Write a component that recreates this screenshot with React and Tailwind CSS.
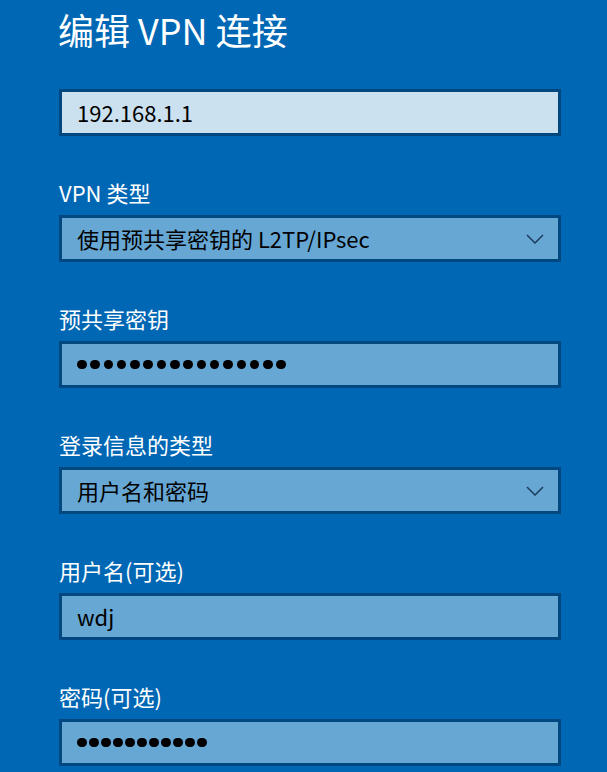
import React from "react";

const font = { fontFamily: '"Noto Sans CJK SC", "Noto Sans", sans-serif' };

function Chevron() {
  return (
    <svg width="18" height="10" viewBox="0 0 18 10" className="shrink-0">
      <path d="M1 1 L9 9 L17 1" fill="none" stroke="#1d3b5c" strokeWidth="1.5" />
    </svg>
  );
}

function Label({ children }) {
  return <div className="text-[22px] leading-[30px] text-white mb-[8px]">{children}</div>;
}

function Box({ light, children, chevron }) {
  return (
    <div
      className={
        "h-[47px] w-[502px] border-[3px] border-[#00487f] flex items-center pl-[15px] pr-[14px] " +
        (light ? "bg-[#cce1f0]" : "bg-[#67a7d4]")
      }
    >
      <div className="flex-1 text-[22px] text-black whitespace-nowrap">{children}</div>
      {chevron && <Chevron />}
    </div>
  );
}

function Dots({ n, pitch }) {
  return (
    <div className="flex items-center h-[30px]">
      {Array.from({ length: n }).map((_, i) => (
        <span
          key={i}
          className="w-[9.5px] h-[9.5px] rounded-full bg-black shrink-0"
          style={{ marginRight: i === n - 1 ? 0 : pitch - 9.5 }}
        />
      ))}
    </div>
  );
}

export default function App() {
  return (
    <div className="w-[607px] h-[772px] bg-[#0067b4] overflow-hidden pl-[59px]" style={font}>
      <div className="pt-[5px] text-[36px] leading-[48px] text-white -ml-[1px]">编辑 VPN 连接</div>
      <div className="mt-[36px]">
        <Box light>192.168.1.1</Box>
      </div>
      <div className="mt-[41px]">
        <Label>VPN 类型</Label>
        <Box chevron>使用预共享密钥的 L2TP/IPsec</Box>
      </div>
      <div className="mt-[41px]">
        <Label>预共享密钥</Label>
        <Box>
          <Dots n={16} pitch={13.3} />
        </Box>
      </div>
      <div className="mt-[41px]">
        <Label>登录信息的类型</Label>
        <Box chevron>用户名和密码</Box>
      </div>
      <div className="mt-[41px]">
        <Label>用户名(可选)</Label>
        <Box>wdj</Box>
      </div>
      <div className="mt-[41px]">
        <Label>密码(可选)</Label>
        <Box>
          <Dots n={11} pitch={12} />
        </Box>
      </div>
    </div>
  );
}
